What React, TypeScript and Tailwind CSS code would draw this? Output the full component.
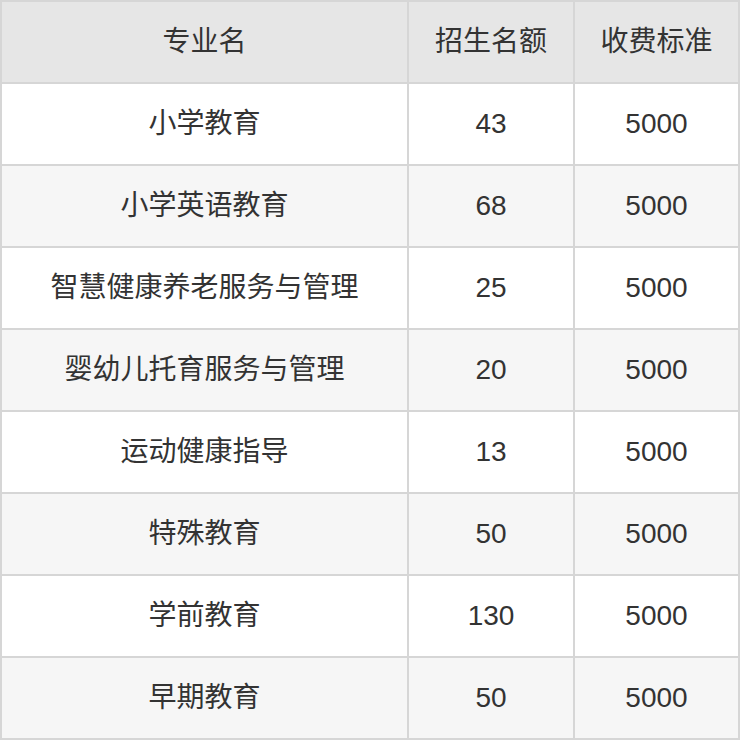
const HEAD = ["专业名", "招生名额", "收费标准"];

const ROWS: [string, string, string][] = [
  ["小学教育", "43", "5000"],
  ["小学英语教育", "68", "5000"],
  ["智慧健康养老服务与管理", "25", "5000"],
  ["婴幼儿托育服务与管理", "20", "5000"],
  ["运动健康指导", "13", "5000"],
  ["特殊教育", "50", "5000"],
  ["学前教育", "130", "5000"],
  ["早期教育", "50", "5000"],
];

export default function App() {
  return (
    <div
      className="w-[740px] h-[740px] bg-white text-[#333333] text-[28px]"
      style={{ fontFamily: '"Liberation Sans", "Noto Sans CJK SC", sans-serif' }}
    >
      <div className="grid grid-cols-[405px_164px_163px] auto-rows-[80px] gap-[2px] p-[2px] bg-[#d6d6d6]">
        {HEAD.map((h) => (
          <div key={h} className="flex items-center justify-center bg-[#e6e6e6]">
            {h}
          </div>
        ))}
        {ROWS.map((row, i) =>
          row.map((cell, j) => (
            <div
              key={i + "-" + j}
              className={
                "flex items-center justify-center " +
                (i % 2 === 0 ? "bg-white" : "bg-[#f6f6f6]")
              }
            >
              {cell}
            </div>
          ))
        )}
      </div>
    </div>
  );
}
